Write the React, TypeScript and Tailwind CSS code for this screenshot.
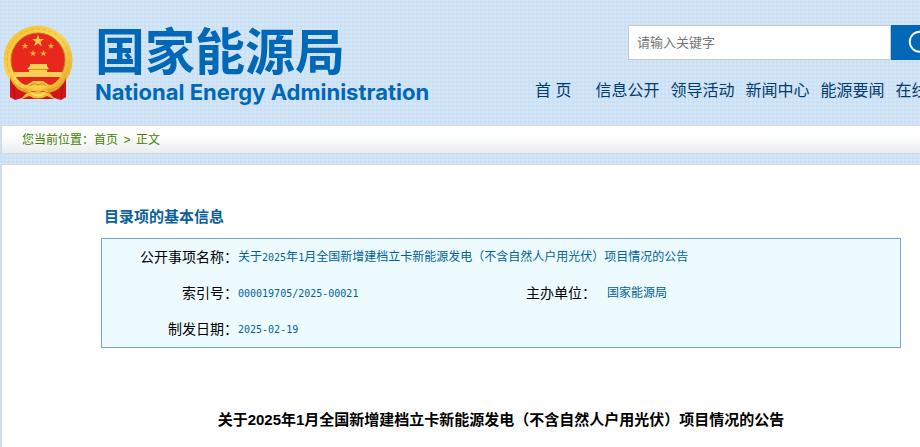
import { Search } from "lucide-react";

const navItems = ["信息公开", "领导活动", "新闻中心", "能源要闻", "在线办事"];

const title = "关于2025年1月全国新增建档立卡新能源发电（不含自然人户用光伏）项目情况的公告";

function star(cx: number, cy: number, r: number) {
  return Array.from({ length: 10 }, (_, i) => {
    const a = -Math.PI / 2 + (i * Math.PI) / 5;
    const d = i % 2 ? r * 0.4 : r;
    return `${(cx + d * Math.cos(a)).toFixed(2)},${(cy + d * Math.sin(a)).toFixed(2)}`;
  }).join(" ");
}

function Emblem() {
  return (
    <svg viewBox="0 0 72 76" className="h-[76px] w-[72px] shrink-0" aria-hidden="true">
      <defs>
        <linearGradient id="gold" x1="0" y1="0" x2="1" y2="1">
          <stop offset="0" stopColor="#f3be2e" />
          <stop offset="0.5" stopColor="#fbd656" />
          <stop offset="1" stopColor="#e3a324" />
        </linearGradient>
      </defs>
      <path d="M9 50 L8 72 L13 74 L20 71 L24 74 L36 70 L48 74 L52 71 L59 74 L64 72 L63 50 Z" fill="#cf1419" />
      <circle cx="36" cy="35" r="34.5" fill="url(#gold)" />
      <circle cx="36" cy="35" r="31" fill="none" stroke="#eab436" strokeWidth="1" strokeDasharray="4 2" />
      <circle cx="36" cy="35" r="27" fill="#e8271d" stroke="#b8801c" strokeWidth="1" />
      <polygon points={star(36, 16, 6.5)} fill="#f5c544" />
      <polygon points={star(23, 21, 3.4)} fill="#f5b93c" />
      <polygon points={star(49, 21, 3.4)} fill="#f5b93c" />
      <polygon points={star(31, 28.5, 3.4)} fill="#f5b93c" />
      <polygon points={star(41.5, 28.5, 3.4)} fill="#f5b93c" />
      <path d="M28 39 h17 v2 l2 3 h-2 v3 h15 l-1 5 H13 l-1 -5 h15 v-3 h-2 l3 -3 z" fill="#fbd052" />
      <path d="M26 44.5 h20" stroke="#d98f1d" strokeWidth="1" />
      <path d="M14 52 H58 Q55 57 49 60 L43 57 Q36 54 29 57 L23 60 Q17 57 14 52 Z" fill="#e6231c" />
      <path d="M8 51 Q14 63 27 65 L24 69 Q12 66 8 55 Z M64 51 Q58 63 45 65 L48 69 Q60 66 64 55 Z" fill="#e3a324" />
      <path d="M8 54 Q14 66 25 68 L20 73 L13 75 L8 72 Z M64 54 Q58 66 47 68 L52 73 L59 75 L64 72 Z" fill="#d3151a" />
      <path d="M11 60 L13 73 M61 60 L59 73" stroke="#a90f14" strokeWidth="1" />
      <path d="M25 68 L31 66 H41 L47 68 L52 74 H20 Z" fill="#d3151a" />
      <path d="M25 60 l6 -4 h10 l6 4 -4 3 -4 2 h-6 l-4 -2 z" fill="#f9cc4a" />
      <path d="M28 61 Q32 57 36 60 Q40 57 44 61" fill="none" stroke="#c98418" strokeWidth="1" />
      <path d="M20 74 Q23 67 29 67 L36 66 L43 67 Q49 67 52 74 L45 71 Q36 76 27 71 Z" fill="#f4bd33" />
      <path d="M29 68 Q36 73 43 68" fill="none" stroke="#fbdc72" strokeWidth="2" />
    </svg>
  );
}

/* Numbers are set in a half-width face beside the Chinese text. */
function Mixed({ text }: { text: string }) {
  return (
    <>
      {text.split(/([\d/-]+)/).map((part, i) =>
        /\d/.test(part) ? (
          <span key={i} className="font-['DejaVu_Sans_Mono',monospace] text-[10px] leading-none">
            {part}
          </span>
        ) : (
          part
        ),
      )}
    </>
  );
}

export default function App() {
  return (
    <div className="min-h-screen overflow-hidden bg-[#d4e7f7] bg-[repeating-linear-gradient(0deg,#b4d0ea30_0_2px,transparent_2px_4px),repeating-linear-gradient(90deg,#b4d0ea30_0_2px,transparent_2px_4px)] pl-px font-['Liberation_Sans','Noto_Sans_CJK_SC',sans-serif] text-black">
      <header className="flex h-[125px] items-start justify-between overflow-hidden whitespace-nowrap">
        <a href="#" className="flex shrink-0 items-start pl-px pt-[25px] text-[#0068b7]">
          <Emblem />
          <span className="ml-[21px] flex flex-col pt-px font-bold">
            <span className="text-[50px] leading-[54px]">国家能源局</span>
            <span className="font-['Inter',sans-serif] text-[22px] leading-[24px]">National Energy Administration</span>
          </span>
        </a>
        <div className="w-[385px] shrink-0 pt-[25px]">
          <form className="flex pl-[93px]" onSubmit={(e) => e.preventDefault()}>
            <input
              type="text"
              aria-label="请输入关键字"
              placeholder="请输入关键字"
              className="h-[35px] w-[263px] shrink-0 border border-[#c8c8c8] bg-white px-2 text-[13px] outline-none placeholder:text-[#757575]"
            />
            <button type="submit" aria-label="搜索" className="flex h-[35px] w-[60px] shrink-0 items-center bg-[#0068b7] pl-[15px] text-white">
              <Search size={30} strokeWidth={1.5} />
            </button>
          </form>
          <nav className="mt-[19px] flex gap-[11px] text-base leading-6 text-[#023b6d]">
            <a href="#" className="mr-[13px]">首 页</a>
            {navItems.map((item) => (
              <a key={item} href="#">{item}</a>
            ))}
          </nav>
        </div>
      </header>

      <nav aria-label="您当前位置" className="flex h-[29px] items-center border-y border-l border-[#d6d8da] bg-linear-to-b from-white from-30% to-[#e9eef1] pl-5 text-xs text-[#458000]">
        <span>您当前位置：</span>
        <a href="#">首页</a>
        <span className="w-[18px] text-center">&gt;</span>
        <span>正文</span>
      </nav>

      <main className="mt-[10px] min-h-[283px] border-l border-t border-[#d6d8da] bg-white pl-[99px] pr-[19px] pt-[40px]">
        <h2 className="pl-[3px] text-[15px] font-bold leading-6 text-[#0b609c]">目录项的基本信息</h2>
        <dl className="mt-[9px] border border-[#70a9e0] bg-[#edfbff] text-xs leading-9 text-[#00619b]">
          <div className="flex h-9">
            <dt className="w-[136px] text-right text-sm leading-9 text-black">公开事项名称：</dt>
            <dd><Mixed text={title} /></dd>
          </div>
          <div className="flex h-9">
            <dt className="w-[136px] text-right text-sm leading-9 text-black">索引号：</dt>
            <dd className="w-[288px]"><Mixed text="000019705/2025-00021" /></dd>
            <dt className="w-[81px] text-sm leading-9 text-black">主办单位：</dt>
            <dd>国家能源局</dd>
          </div>
          <div className="flex h-9">
            <dt className="w-[136px] text-right text-sm leading-9 text-black">制发日期：</dt>
            <dd><Mixed text="2025-02-19" /></dd>
          </div>
        </dl>
        <h1 className="mt-[60px] text-center text-[15px] font-bold leading-6">{title}</h1>
      </main>
    </div>
  );
}
